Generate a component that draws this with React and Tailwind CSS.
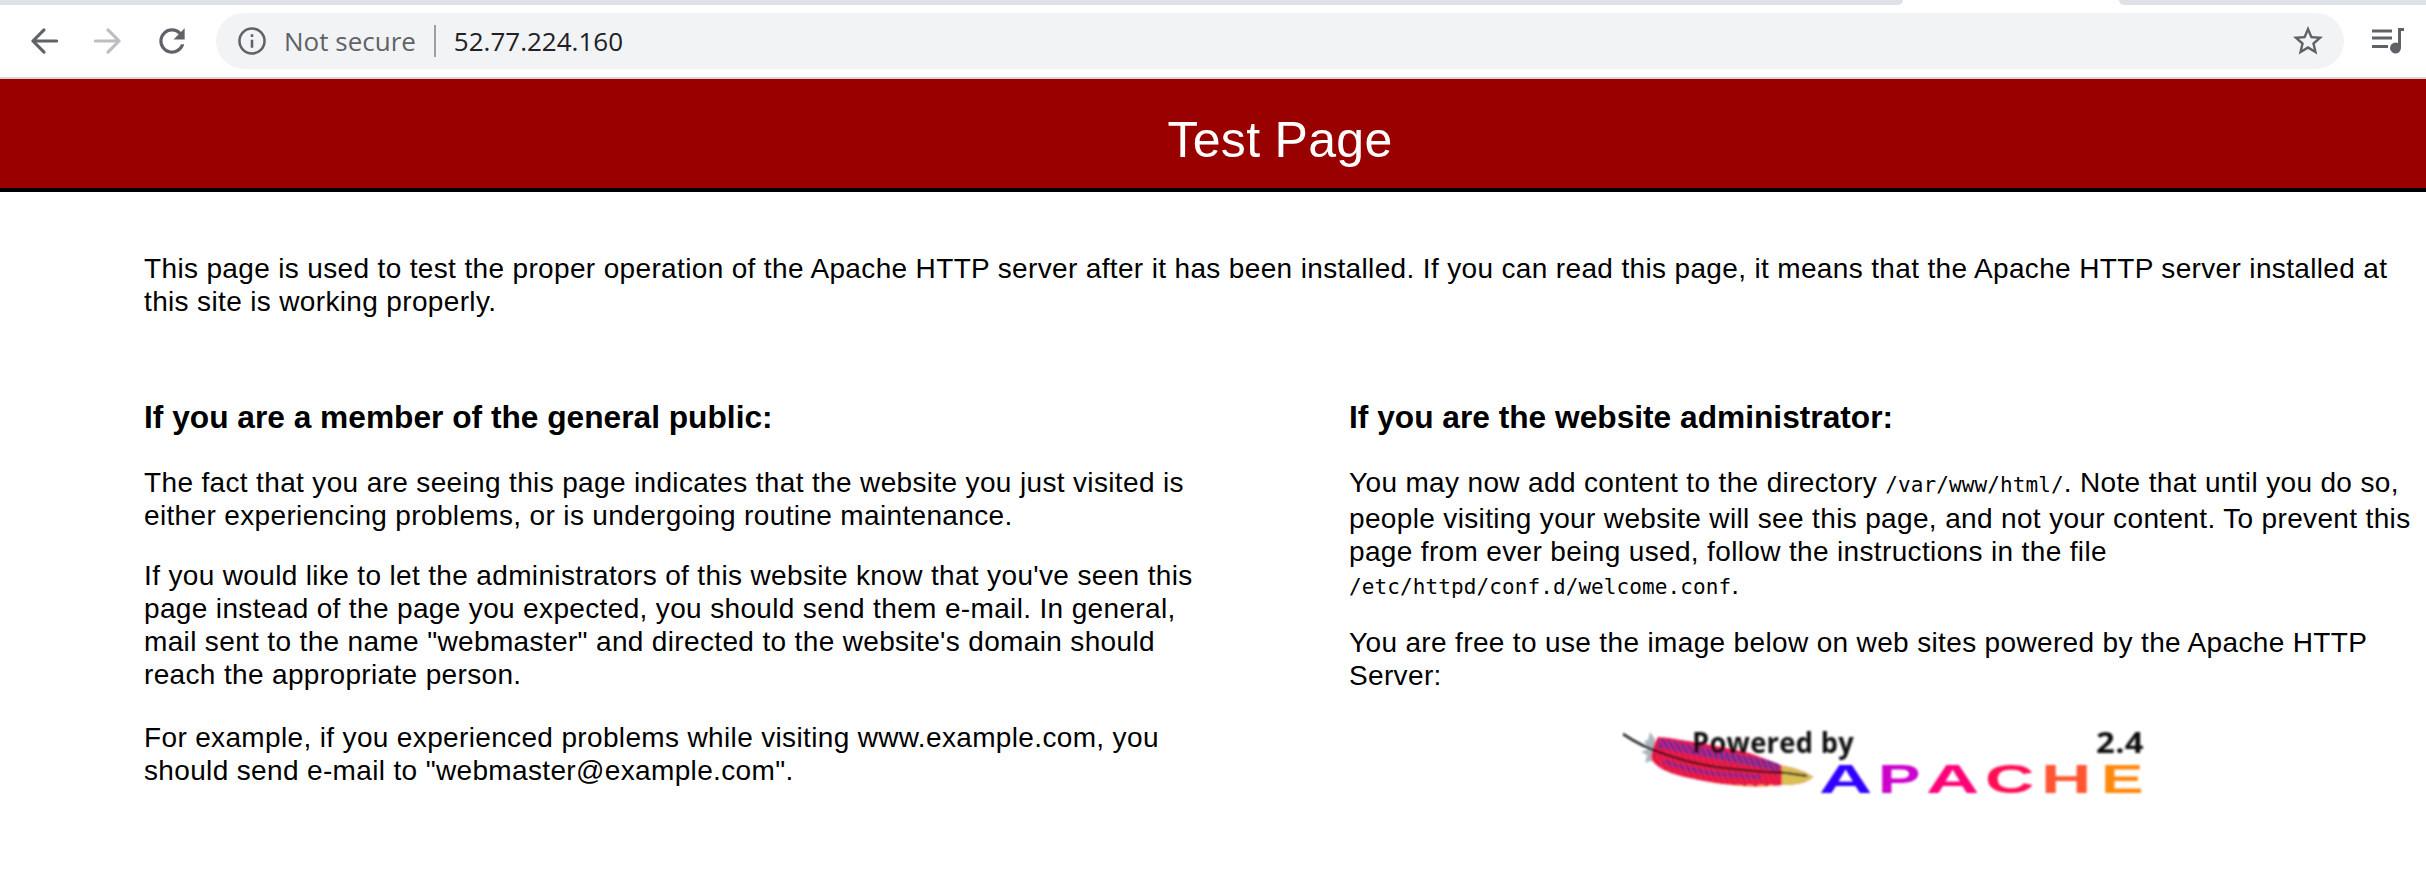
const hatch = Array.from({ length: 30 }, (_, i) => 50 + i * 5.6);

const ApacheLogo = () => (
  <svg width="523" height="76" viewBox="21 20 523 76" className="block">
    <defs>
      <filter id="soft"><feGaussianBlur stdDeviation="0.8" /></filter>
      <clipPath id="feather">
        <path d="M57 32 C72 33 85 36 98 38 C115 41 132 44 148 48 C160 52 172 57 182 61 C194 63 206 67 212 72 C206 78 194 80 182 80 C170 81 156 82 142 81 C128 80 112 78 98 75 C84 72 68 69 58 62 C53 58 50 55 50 52 C51 44 53 38 57 32Z" />
      </clipPath>
    </defs>
    <g filter="url(#soft)">
      {/* feather */}
      <path d="M43 36 L47 35 L49 27 L54 34 L55 57 L49 56 L44 58 L46 50 L40 47 L47 44Z" fill="#aab8be" />
      <g clipPath="url(#feather)">
        <rect x="45" y="25" width="175" height="60" fill="#e2184c" />
        <path d="M58 38 C85 44 130 52 178 62" fill="none" stroke="#5c2a9c" strokeWidth="9" />
        <path d="M62 56 C90 67 120 70 160 72" fill="none" stroke="#7a2490" strokeWidth="5" />
        {hatch.map((x) => (
          <path key={x} d={`M${x} 20 L${x + 18} 50`} stroke="#f01f58" strokeWidth="1.6" />
        ))}
        {hatch.map((x) => (
          <path key={x} d={`M${x} 50 L${x + 16} 84`} stroke="#f5283a" strokeWidth="1.4" />
        ))}
        <path d="M70 70 C95 78 125 83 172 81" fill="none" stroke="#f2c23a" strokeWidth="2.4" strokeDasharray="6 5" />
        <rect x="181" y="55" width="40" height="30" fill="#d9bd55" />
      </g>
      <path d="M22 29 C34 37 46 43 58 47 C76 54 95 59 115 62 C140 65 162 67 186 68 L206 71" fill="none" stroke="#111" strokeWidth="2.2" />
      <text x="91" y="48" fontFamily="'Open Sans', sans-serif" fontWeight="700" fontSize="29" textLength="162" lengthAdjust="spacingAndGlyphs" fill="#111">Powered by</text>
      <text x="495" y="48" fontFamily="'Open Sans', sans-serif" fontWeight="700" fontSize="29" textLength="48" lengthAdjust="spacingAndGlyphs" fill="#111">2.4</text>
      <g fontFamily="'Liberation Sans', sans-serif" fontWeight="700" fontSize="40">
        <text x="218" y="88" textLength="54" lengthAdjust="spacingAndGlyphs" fill="#3300ff">A</text>
        <text x="277" y="88" textLength="43" lengthAdjust="spacingAndGlyphs" fill="#cc00cc">P</text>
        <text x="325" y="88" textLength="54" lengthAdjust="spacingAndGlyphs" fill="#ff0077">A</text>
        <text x="384" y="88" textLength="50" lengthAdjust="spacingAndGlyphs" fill="#ff1155">C</text>
        <text x="440" y="88" textLength="51" lengthAdjust="spacingAndGlyphs" fill="#ff5533">H</text>
        <text x="500" y="88" textLength="43" lengthAdjust="spacingAndGlyphs" fill="#ff8811">E</text>
      </g>
    </g>
  </svg>
);

const Mono = ({ children }) => (
  <span className="font-['DejaVu_Sans_Mono',monospace] text-[21px] whitespace-nowrap tracking-[0.1px]">{children}</span>
);

export default function App() {
  return (
    <div className="w-[2426px] h-[884px] overflow-hidden bg-white font-['Liberation_Sans',sans-serif] text-[28px] tracking-[0.35px] leading-[33px] text-black">
      {/* tab strip */}
      <div className="h-[5px] flex bg-white">
        <div className="w-[1903px] bg-[#dee1e6] rounded-br-[8px]" />
        <div className="w-[216px]" />
        <div className="flex-1 bg-[#dee1e6] rounded-bl-[8px]" />
      </div>

      {/* toolbar */}
      <div className="h-[74px] flex items-center pl-[25px] pr-[22px] border-b-2 border-[#d5d7d9] font-['Open_Sans',sans-serif] tracking-normal">
        <svg width="38" height="38" viewBox="0 0 24 24" className="text-[#5f6368]" fill="none" stroke="currentColor" strokeWidth="2" strokeLinecap="round" strokeLinejoin="round">
          <path d="M20 12H5M12 5l-7 7 7 7" />
        </svg>
        <svg width="38" height="38" viewBox="0 0 24 24" className="ml-[26px] text-[#bcbec1]" fill="none" stroke="currentColor" strokeWidth="2" strokeLinecap="round" strokeLinejoin="round">
          <path d="M4 12h15M12 5l7 7-7 7" />
        </svg>
        <svg width="38" height="38" viewBox="0 0 24 24" className="ml-[26px] text-[#5f6368]" fill="currentColor">
          <path d="M17.65 6.35A7.96 7.96 0 0 0 12 4a8 8 0 1 0 7.73 10h-2.08A6 6 0 1 1 12 6c1.66 0 3.14.69 4.22 1.78L13 11h7V4l-2.35 2.35z" />
        </svg>
        <div className="ml-[25px] flex-1 h-[56px] rounded-full bg-[#f1f3f4] flex items-center pl-[20px] pr-[18px]">
          <svg width="32" height="32" viewBox="0 0 24 24" fill="none" className="text-[#5f6368]" stroke="currentColor" strokeWidth="1.9">
            <circle cx="12" cy="12" r="9.4" />
            <path d="M12 11v6M12 7v2" />
          </svg>
          <span className="ml-[16px] text-[26px] text-[#5f6368] leading-none">Not secure</span>
          <span className="ml-[18px] w-[2px] h-[32px] bg-[#9aa0a6]" />
          <span className="ml-[18px] text-[26px] text-[#202124] leading-none">52.77.224.160</span>
          <svg width="36" height="36" viewBox="0 0 24 24" fill="currentColor" className="ml-auto text-[#5f6368]">
            <path d="M22 9.24l-7.19-.62L12 2 9.19 8.63 2 9.24l5.46 4.73L5.82 21 12 17.27 18.18 21l-1.63-7.03L22 9.24zM12 15.4l-3.76 2.27 1-4.28-3.32-2.88 4.38-.38L12 6.1l1.71 4.04 4.38.38-3.32 2.88 1 4.28L12 15.4z" />
          </svg>
        </div>
        <svg width="34" height="34" viewBox="0 0 34 34" fill="#5f6368" className="ml-[26px]">
          <path d="M2 5.5h20v3H2zM2 12.5h20v3H2zM2 21h16v3H2z" />
          <path d="M28 4h6v3h-3v17a5.5 5.5 0 1 1-3-4.9z" />
        </svg>
      </div>

      {/* banner */}
      <div className="h-[113px] bg-[#990000] border-b-4 border-black flex items-center justify-center pl-[134px]">
        <h1 className="text-[50px] leading-none text-white font-normal pt-[12px] tracking-[0.3px]">Test Page</h1>
      </div>

      {/* content */}
      <div className="pl-[144px] pt-[60px]">
        <p className="w-[2270px]">
          This page is used to test the proper operation of the Apache HTTP server after it has been installed. If you can read this page, it means that the Apache HTTP server installed at this site is working properly.
        </p>

        <div className="flex mt-[81px]">
          <div className="w-[1060px]">
            <h2 className="text-[31.7px] tracking-normal leading-[36px] font-bold">If you are a member of the general public:</h2>
            <p className="mt-[31px]">
              The fact that you are seeing this page indicates that the website you just visited is either experiencing problems, or is undergoing routine maintenance.
            </p>
            <p className="mt-[27px]">
              If you would like to let the administrators of this website know that you've seen this page instead of the page you expected, you should send them e-mail. In general, mail sent to the name "webmaster" and directed to the website's domain should reach the appropriate person.
            </p>
            <p className="mt-[30px]">
              For example, if you experienced problems while visiting www.example.com, you should send e-mail to "webmaster@example.com".
            </p>
          </div>

          <div className="ml-[145px] w-[1075px]">
            <h2 className="text-[31.7px] tracking-normal leading-[36px] font-bold">If you are the website administrator:</h2>
            <p className="mt-[31px]">
              You may now add content to the directory <Mono>/var/www/html/</Mono>. Note that until you do so, people visiting your website will see this page, and not your content. To prevent this page from ever being used, follow the instructions in the file <Mono>/etc/httpd/conf.d/welcome.conf</Mono>.
            </p>
            <p className="mt-[22px]">
              You are free to use the image below on web sites powered by the Apache HTTP Server:
            </p>
            <div className="mt-[33px] pr-[7px] flex justify-center">
              <ApacheLogo />
            </div>
          </div>
        </div>
      </div>
    </div>
  );
}
